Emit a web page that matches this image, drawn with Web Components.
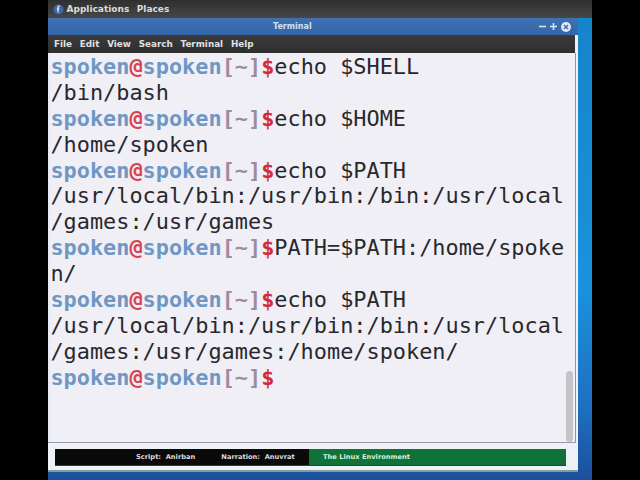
<!DOCTYPE html>
<html><head><meta charset="utf-8"><style>
html,body{margin:0;padding:0;background:#000;width:640px;height:480px;overflow:hidden}
body{display:flex;justify-content:center;font-family:"DejaVu Sans",sans-serif}
</style></head><body>
<x-desktop>
<x-panel></x-panel>
<x-window>
<x-term>
<x-line><x-prompt></x-prompt>echo $SHELL</x-line>
<x-line>/bin/bash</x-line>
<x-line><x-prompt></x-prompt>echo $HOME</x-line>
<x-line>/home/spoken</x-line>
<x-line><x-prompt></x-prompt>echo $PATH</x-line>
<x-line>/usr/local/bin:/usr/bin:/bin:/usr/local</x-line>
<x-line>/games:/usr/games</x-line>
<x-line><x-prompt></x-prompt>PATH=$PATH:/home/spoke</x-line>
<x-line>n/</x-line>
<x-line><x-prompt></x-prompt>echo $PATH</x-line>
<x-line>/usr/local/bin:/usr/bin:/bin:/usr/local</x-line>
<x-line>/games:/usr/games:/home/spoken/</x-line>
<x-line><x-prompt></x-prompt></x-line>
</x-term>
<x-credits slot="footer"></x-credits>
</x-window>
</x-desktop>
<script>
function def(name,html){customElements.define(name,class extends HTMLElement{constructor(){super();this.attachShadow({mode:'open'}).innerHTML=html}})}
def('x-desktop',`<style>:host{display:flex;flex-direction:column;width:544px;height:480px;background:linear-gradient(180deg,#1683c8 0,#1a92dc 60%,#1f6fc0 85%,#1c4f9c 100%);overflow:hidden}</style><slot></slot>`);
def('x-panel',`<style>:host{display:flex;align-items:center;height:18px;flex:none;background:linear-gradient(180deg,#2f2f2f,#474747);color:#dcdcdc;font:bold 9px "DejaVu Sans",sans-serif;padding-left:5px;gap:7.5px}
svg{display:block;margin-right:-5px}</style>
<svg width="11" height="11" viewBox="0 0 11 11"><circle cx="5.5" cy="5.5" r="5" fill="#3f66a8"/><path d="M6.8 2.2C5.6 2 5 2.7 5 4v4.6M3.8 5h2.6" stroke="#f0f0f0" stroke-width="1.2" fill="none"/></svg>
<span>Applications</span><span>Places</span>`);
def('x-window',`<style>:host{display:flex;flex-direction:column;flex:none;width:530px;height:454px;background:#eef2f6;box-shadow:inset 0 -2px 0 #7f9f98}
.title{display:flex;align-items:center;height:17px;background:linear-gradient(180deg,#3f71b2,#3566a8);color:#cfe0f2;font:bold 8px "DejaVu Sans",sans-serif}
.title span{margin-left:225px}
.btns{margin-left:auto;display:flex;align-items:center;gap:4px;padding-right:7px}
svg{display:block}
.menu{display:flex;align-items:center;gap:7.8px;height:18px;padding-left:6px;margin-right:3px;background:linear-gradient(180deg,#3b3b3b,#2e2e2e);color:#e0e0e0;font:bold 8.8px "DejaVu Sans",sans-serif}
.body{display:flex;height:390px;padding-left:2px;margin-right:2px;background:#e4ebf6;border-bottom:1px solid #9a98b0;box-sizing:border-box}
.sb{flex:none;width:8px;display:flex;flex-direction:column;justify-content:flex-end;background:#f1eff6;padding-right:2px;border-right:1px solid #8f95a2}
.thumb{width:7px;height:71px;margin-left:1px;background:#c4c3c8;border-radius:4px}
.foot{padding:6px 12px 0 7px}
</style>
<div class="title"><span>Terminal</span><div class="btns">
<svg width="7" height="7" viewBox="0 0 7 7"><path d="M0 3.5h7" stroke="#d8e6f4" stroke-width="1.6"/></svg>
<svg width="7" height="7" viewBox="0 0 7 7"><path d="M0 3.5h7M3.5 0v7" stroke="#d8e6f4" stroke-width="1.6"/></svg>
<svg width="10" height="10" viewBox="0 0 10 10"><circle cx="5" cy="5" r="5" fill="#dfe8f2"/><path d="M3 3l4 4M7 3l-4 4" stroke="#3f71b2" stroke-width="1.5"/></svg>
</div></div>
<div class="menu"><span>File</span><span>Edit</span><span>View</span><span>Search</span><span>Terminal</span><span>Help</span></div>
<div class="body"><slot></slot><div class="sb"><div class="thumb"></div></div></div>
<div class="foot"><slot name="footer"></slot></div>`);
def('x-term',`<style>:host{display:block;flex:1;min-width:0;background:#f1eff6;color:#28282d;font:21.88px/25.9px "DejaVu Sans Mono",monospace;padding:1px 0 0 0.4px}</style><slot></slot>`);
def('x-line',`<style>:host{display:block;height:25.9px;white-space:nowrap}</style><slot></slot>`);
def('x-prompt',`<style>:host{display:inline}.u{color:#6e97c4;font-weight:bold}.a{color:#d9434f;font-weight:bold}.b{color:#a08aa0;font-weight:bold}.d{color:#d42a3a;font-weight:bold}</style><span class="u">spoken</span><span class="a">@</span><span class="u">spoken</span><span class="b">[~]</span><span class="d">$</span>`);
def('x-credits',`<style>:host{display:flex;height:17px;background:#0a0a0a;border-bottom:1px solid #3a3a3a;box-sizing:border-box;color:#dcdcdc;font:bold 6.7px "DejaVu Sans",sans-serif;white-space:nowrap}
.l{width:254px;display:flex;align-items:center;gap:26px;padding-left:81px;box-sizing:border-box}
.r{flex:1;background:#0f7238;color:#d8f0dc;display:flex;align-items:center;padding-left:14px}</style>
<div class="l"><span>Script:&nbsp; Anirban</span><span>Narration:&nbsp; Anuvrat</span></div><div class="r">The Linux Environment</div>`);
</script>
</body></html>
